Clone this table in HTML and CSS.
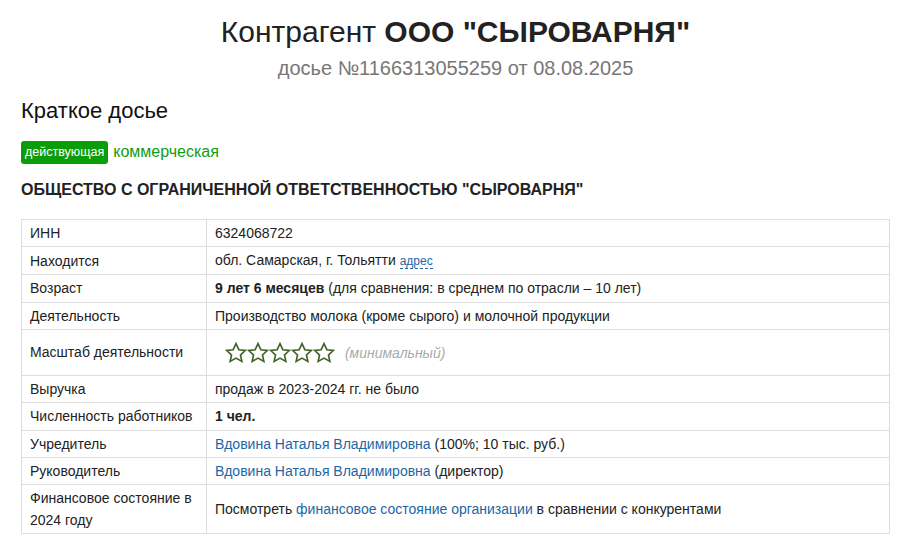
FILE: index.html
```html
<!DOCTYPE html>
<html lang="ru">
<head>
<meta charset="utf-8">
<title>Контрагент ООО "СЫРОВАРНЯ"</title>
<link rel="stylesheet" href="styles.css">
</head>
<body>
<div class="page">
  <header class="head">
    <h1 class="title">Контрагент <b>ООО "СЫРОВАРНЯ"</b></h1>
    <div class="subtitle">досье №1166313055259 от 08.08.2025</div>
  </header>
  <h2 class="section">Краткое досье</h2>
  <div class="status">
    <span class="badge">действующая</span>
    <span class="kind">коммерческая</span>
  </div>
  <h3 class="fullname">ОБЩЕСТВО С ОГРАНИЧЕННОЙ ОТВЕТСТВЕННОСТЬЮ "СЫРОВАРНЯ"</h3>
  <table class="info">
    <tr><td class="k">ИНН</td><td>6324068722</td></tr>
    <tr><td class="k">Находится</td><td>обл. Самарская, г. Тольятти <a class="addr" href="#">адрес</a></td></tr>
    <tr><td class="k">Возраст</td><td><b>9 лет 6 месяцев</b> (для сравнения: в среднем по отрасли – 10 лет)</td></tr>
    <tr><td class="k">Деятельность</td><td>Производство молока (кроме сырого) и молочной продукции</td></tr>
    <tr class="scale"><td class="k">Масштаб деятельности</td><td>
      <span class="stars">
        <svg viewBox="0 0 24 24" class="star"><path d="M12 1.8l3.1 6.6 7.1.8-5.3 4.9 1.5 7.1L12 17.6l-6.4 3.6 1.5-7.1-5.3-4.9 7.1-.8z"/></svg><svg viewBox="0 0 24 24" class="star"><path d="M12 1.8l3.1 6.6 7.1.8-5.3 4.9 1.5 7.1L12 17.6l-6.4 3.6 1.5-7.1-5.3-4.9 7.1-.8z"/></svg><svg viewBox="0 0 24 24" class="star"><path d="M12 1.8l3.1 6.6 7.1.8-5.3 4.9 1.5 7.1L12 17.6l-6.4 3.6 1.5-7.1-5.3-4.9 7.1-.8z"/></svg><svg viewBox="0 0 24 24" class="star"><path d="M12 1.8l3.1 6.6 7.1.8-5.3 4.9 1.5 7.1L12 17.6l-6.4 3.6 1.5-7.1-5.3-4.9 7.1-.8z"/></svg><svg viewBox="0 0 24 24" class="star"><path d="M12 1.8l3.1 6.6 7.1.8-5.3 4.9 1.5 7.1L12 17.6l-6.4 3.6 1.5-7.1-5.3-4.9 7.1-.8z"/></svg>
      </span>
      <span class="muted">(минимальный)</span>
    </td></tr>
    <tr><td class="k">Выручка</td><td>продаж в 2023-2024 гг. не было</td></tr>
    <tr><td class="k">Численность работников</td><td><b>1 чел.</b></td></tr>
    <tr><td class="k">Учредитель</td><td><a href="#">Вдовина Наталья Владимировна</a> (100%; 10 тыс. руб.)</td></tr>
    <tr><td class="k">Руководитель</td><td><a href="#">Вдовина Наталья Владимировна</a> (директор)</td></tr>
    <tr><td class="k">Финансовое состояние в 2024 году</td><td>Посмотреть <a href="#">финансовое состояние организации</a> в сравнении с конкурентами</td></tr>
  </table>
</div>
</body>
</html>
```

FILE: styles.css
```css
* { box-sizing: border-box; }
html, body { margin: 0; padding: 0; background: #fff; }
body {
  font-family: "Liberation Sans", Arial, sans-serif;
  font-size: 14px;
  color: #222;
}
.page {
  width: 869px;
  margin-left: 21px;
}
.head { text-align: center; }
.title {
  margin: 0;
  padding-top: 14px;
  font-size: 30px;
  font-weight: normal;
  line-height: 36px;
  color: #222;
}
.title b { font-weight: bold; }
.subtitle {
  font-size: 20px;
  line-height: 26px;
  color: #777;
  margin-top: 5px;
}
.section {
  margin: 16px 0 0;
  font-size: 22px;
  font-weight: normal;
  line-height: 28px;
  color: #111;
}
.status {
  margin-top: 15px;
  display: flex;
  align-items: center;
  gap: 5px;
  height: 24px;
}
.badge {
  display: inline-block;
  background: #0a9d0a;
  color: #fff;
  font-size: 12.5px;
  line-height: 23px;
  padding: 0 4px;
  border-radius: 3px;
}
.kind {
  color: #119c11;
  font-size: 16px;
}
.fullname {
  margin: 16px 0 0;
  font-size: 16px;
  font-weight: bold;
  line-height: 20px;
  color: #222;
}
.info {
  margin-top: 19px;
  width: 869px;
  border-collapse: collapse;
  border: 1px solid #ddd;
}
.info td {
  border: 1px solid #ddd;
  padding: 2px 8px;
  line-height: 22.2px;
  vertical-align: middle;
  color: #222;
}
.info td.k { width: 185px; }
.info tr.scale td { padding-top: 11px; padding-bottom: 11px; }
.info a { color: #1d66a5; text-decoration: none; }
.info a.addr {
  font-size: 12px;
  border-bottom: 1px dashed #1d66a5;
}
.stars {
  display: inline-flex;
  vertical-align: middle;
  margin-left: 10px;
  margin-right: 6px;
}
.star {
  width: 22px;
  height: 22px;
  fill: none;
  stroke: #3f6324;
  stroke-width: 1.8;
  stroke-linejoin: miter;
}
.muted {
  color: #aaa;
  font-style: italic;
  vertical-align: middle;
}
```
